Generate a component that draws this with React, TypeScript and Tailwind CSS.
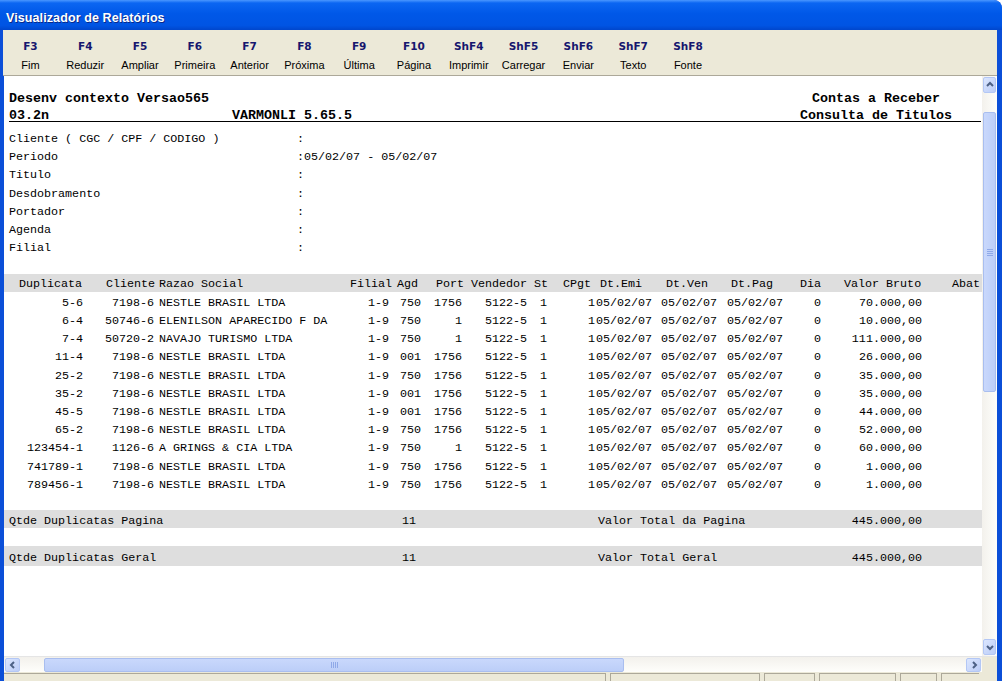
import React from "react";

const keys: [string, string][] = [
  ["F3", "Fim"],
  ["F4", "Reduzir"],
  ["F5", "Ampliar"],
  ["F6", "Primeira"],
  ["F7", "Anterior"],
  ["F8", "Próxima"],
  ["F9", "Última"],
  ["F10", "Página"],
  ["ShF4", "Imprimir"],
  ["ShF5", "Carregar"],
  ["ShF6", "Enviar"],
  ["ShF7", "Texto"],
  ["ShF8", "Fonte"],
];

const fields: [string, string][] = [
  ["Cliente ( CGC / CPF / CODIGO )", ""],
  ["Periodo", "05/02/07 - 05/02/07"],
  ["Titulo", ""],
  ["Desdobramento", ""],
  ["Portador", ""],
  ["Agenda", ""],
  ["Filial", ""],
];

type Row = [string, string, string, string, string, string, string, string, string, string, string, string, string, string];

const rows: Row[] = [
  ["5-6", "7198-6", "NESTLE BRASIL LTDA", "1-9", "750", "1756", "5122-5", "1", "1", "05/02/07", "05/02/07", "05/02/07", "0", "70.000,00"],
  ["6-4", "50746-6", "ELENILSON APARECIDO F DA", "1-9", "750", "1", "5122-5", "1", "1", "05/02/07", "05/02/07", "05/02/07", "0", "10.000,00"],
  ["7-4", "50720-2", "NAVAJO TURISMO LTDA", "1-9", "750", "1", "5122-5", "1", "1", "05/02/07", "05/02/07", "05/02/07", "0", "111.000,00"],
  ["11-4", "7198-6", "NESTLE BRASIL LTDA", "1-9", "001", "1756", "5122-5", "1", "1", "05/02/07", "05/02/07", "05/02/07", "0", "26.000,00"],
  ["25-2", "7198-6", "NESTLE BRASIL LTDA", "1-9", "750", "1756", "5122-5", "1", "1", "05/02/07", "05/02/07", "05/02/07", "0", "35.000,00"],
  ["35-2", "7198-6", "NESTLE BRASIL LTDA", "1-9", "001", "1756", "5122-5", "1", "1", "05/02/07", "05/02/07", "05/02/07", "0", "35.000,00"],
  ["45-5", "7198-6", "NESTLE BRASIL LTDA", "1-9", "001", "1756", "5122-5", "1", "1", "05/02/07", "05/02/07", "05/02/07", "0", "44.000,00"],
  ["65-2", "7198-6", "NESTLE BRASIL LTDA", "1-9", "750", "1756", "5122-5", "1", "1", "05/02/07", "05/02/07", "05/02/07", "0", "52.000,00"],
  ["123454-1", "1126-6", "A GRINGS & CIA LTDA", "1-9", "750", "1", "5122-5", "1", "1", "05/02/07", "05/02/07", "05/02/07", "0", "60.000,00"],
  ["741789-1", "7198-6", "NESTLE BRASIL LTDA", "1-9", "750", "1756", "5122-5", "1", "1", "05/02/07", "05/02/07", "05/02/07", "0", "1.000,00"],
  ["789456-1", "7198-6", "NESTLE BRASIL LTDA", "1-9", "750", "1756", "5122-5", "1", "1", "05/02/07", "05/02/07", "05/02/07", "0", "1.000,00"],
];

function Chevron({ dir }: { dir: "up" | "down" | "left" | "right" }) {
  const d =
    dir === "up"
      ? "M2 6 L5 3 L8 6"
      : dir === "down"
      ? "M2 4 L5 7 L8 4"
      : dir === "left"
      ? "M6 2 L3 5 L6 8"
      : "M4 2 L7 5 L4 8";
  return (
    <svg width="10" height="10" viewBox="0 0 10 10">
      <path d={d} fill="none" stroke="#4d6185" strokeWidth="2" />
    </svg>
  );
}

function ArrowBtn({ dir, cls }: { dir: "up" | "down" | "left" | "right"; cls: string }) {
  return (
    <div
      className={
        "shrink-0 flex items-center justify-center rounded-[2px] border border-[#b3c7f5] bg-[linear-gradient(135deg,#dbe6fe,#bccdf7)] " +
        cls
      }
    >
      <Chevron dir={dir} />
    </div>
  );
}

export default function App() {
  const mono = "font-['Liberation_Mono','Courier_New',monospace]";
  return (
    <div className="w-[1002px] h-[681px] overflow-hidden flex flex-col bg-[#0b4fd8] rounded-tr-[8px]">
      {/* Title bar */}
      <div className="h-[30px] shrink-0 flex items-center pl-[6px] pt-[6px] bg-[linear-gradient(to_bottom,#4a97ff_0%,#0b66f2_10%,#0058e8_45%,#0054e3_85%,#0046cc_100%)] rounded-tr-[8px]">
        <span className="font-['Liberation_Sans',Arial,sans-serif] font-bold text-[12.5px] text-white [text-shadow:1px_1px_0_#0a2a8a] tracking-[0.1px]">
          Visualizador de Relatórios
        </span>
      </div>

      <div className="flex-1 flex flex-col ml-[4px] mr-[5px] min-h-0">
        {/* Toolbar */}
        <div className="h-[46px] shrink-0 bg-[#ece9d8] border-b border-[#aca899] flex -ml-[1px]">
          {keys.map(([k, l]) => (
            <div key={k} className="w-[54.8px] flex flex-col items-center pt-[9px]">
              <span className="font-['DejaVu_Sans',Verdana,sans-serif] font-bold text-[10.5px] leading-[14px] text-[#16166e]">
                {k}
              </span>
              <span className="mt-[5px] font-['Liberation_Sans',Tahoma,sans-serif] text-[11px] leading-[14px] text-black">
                {l}
              </span>
            </div>
          ))}
        </div>

        {/* Main area */}
        <div className="flex-1 flex min-h-0">
          <div className={"flex-1 bg-white overflow-hidden text-black " + mono}>
            {/* header */}
            <div className="pt-[14px] pl-[5px] font-bold text-[13.33px]">
              <div className="flex h-[17px] leading-[17px]">
                <div className="w-[791px]">Desenv contexto Versao565</div>
                <div className="w-[152px] text-center">Contas a Receber</div>
              </div>
              <div className="flex h-[14px] leading-[17px]">
                <div className="w-[223px]">03.2n</div>
                <div className="w-[568px]">VARMONLI 5.65.5</div>
                <div className="w-[152px] text-center">Consulta de Titulos</div>
              </div>
              <div className="h-px w-[972px] bg-black" />
            </div>

            {/* fields */}
            <div className="pt-[8px] pl-[5px] text-[11.7px] leading-[18.2px]">
              {fields.map(([l, v]) => (
                <div key={l} className="flex h-[18.2px] whitespace-pre">
                  <div className="w-[288px]">{l}</div>
                  <div>:{v}</div>
                </div>
              ))}
            </div>

            {/* table header */}
            <div className="mt-[16.5px] h-[18px] bg-[#dedede] flex items-start pt-[1px] leading-[18px] text-[11.7px] whitespace-pre">
              <div className="w-[15px]" />
              <div className="w-[87px]">Duplicata</div>
              <div className="w-[53px]">Cliente</div>
              <div className="w-[191px]">Razao Social</div>
              <div className="w-[47px]">Filial</div>
              <div className="w-[39px]">Agd</div>
              <div className="w-[35px]">Port</div>
              <div className="w-[63px]">Vendedor</div>
              <div className="w-[29px]">St</div>
              <div className="w-[37px]">CPgt</div>
              <div className="w-[66px]">Dt.Emi</div>
              <div className="w-[65px]">Dt.Ven</div>
              <div className="w-[69px]">Dt.Pag</div>
              <div className="w-[44px]">Dia</div>
              <div className="w-[108px]">Valor Bruto</div>
              <div>Abat</div>
            </div>

            {/* rows */}
            <div className="mt-[2px] text-[11.7px] leading-[18.2px]">
              {rows.map((r, i) => (
                <div key={i} className="flex h-[18.2px] whitespace-pre">
                  <div className="w-[79px] text-right">{r[0]}</div>
                  <div className="w-[71px] text-right">{r[1]}</div>
                  <div className="w-[191px] pl-[5px]">{r[2]}</div>
                  <div className="w-[44px] text-right">{r[3]}</div>
                  <div className="w-[32px] pl-[11px]">{r[4]}</div>
                  <div className="w-[41px] text-right">{r[5]}</div>
                  <div className="w-[65px] text-right">{r[6]}</div>
                  <div className="w-[20px] text-right">{r[7]}</div>
                  <div className="w-[48px] text-right">{r[8]}</div>
                  <div className="w-[66px] pl-[1px]">{r[9]}</div>
                  <div className="w-[66px]">{r[10]}</div>
                  <div className="w-[73px]">{r[11]}</div>
                  <div className="w-[21px] text-right">{r[12]}</div>
                  <div className="w-[101px] text-right">{r[13]}</div>
                </div>
              ))}
            </div>

            {/* totals */}
            <div className="mt-[16px] h-[18px] bg-[#dedede] flex items-start pt-[2px] leading-[18px] text-[11.7px] whitespace-pre pl-[5px]">
              <div className="w-[393px]">Qtde Duplicatas Pagina</div>
              <div className="w-[196px]">11</div>
              <div className="w-[224px]">Valor Total da Pagina</div>
              <div className="w-[100px] text-right">445.000,00</div>
            </div>
            <div className="mt-[18px] h-[20px] bg-[#dedede] flex items-start pt-[3px] leading-[18px] text-[11.7px] whitespace-pre pl-[5px]">
              <div className="w-[393px]">Qtde Duplicatas Geral</div>
              <div className="w-[196px]">11</div>
              <div className="w-[224px]">Valor Total Geral</div>
              <div className="w-[100px] text-right">445.000,00</div>
            </div>
          </div>

          {/* vertical scrollbar */}
          <div className="w-[15px] shrink-0 flex flex-col bg-[linear-gradient(to_right,#f3f1ec,#fefefb)] py-px">
            <ArrowBtn dir="up" cls="h-[16px] mx-px" />
            <div className="flex-1 flex flex-col pt-[19px]">
              <div className="h-[280px] mx-px rounded-[2px] border border-[#a9beef] bg-[linear-gradient(to_right,#c9d8fc,#bccef8)] flex flex-col items-center justify-center gap-[1px]">
                <div className="w-[6px] h-px bg-[#8fa9e8]" />
                <div className="w-[6px] h-px bg-[#8fa9e8]" />
                <div className="w-[6px] h-px bg-[#8fa9e8]" />
                <div className="w-[6px] h-px bg-[#8fa9e8]" />
              </div>
            </div>
            <ArrowBtn dir="down" cls="h-[16px] mx-px" />
          </div>
        </div>

        {/* horizontal scrollbar */}
        <div className="h-[16px] shrink-0 flex border-t border-[#e5e5e5]">
          <div className="flex-1 flex items-center bg-[linear-gradient(to_bottom,#f3f1ec,#fefefb)] py-px">
            <ArrowBtn dir="left" cls="w-[15px] h-[14px] ml-px" />
            <div className="w-[24px]" />
            <div className="w-[580px] h-[14px] rounded-[2px] border border-[#a9beef] bg-[linear-gradient(to_bottom,#c9d8fc,#bccef8)] flex items-center justify-center gap-[1px]">
              <div className="w-px h-[6px] bg-[#8fa9e8]" />
              <div className="w-px h-[6px] bg-[#8fa9e8]" />
              <div className="w-px h-[6px] bg-[#8fa9e8]" />
              <div className="w-px h-[6px] bg-[#8fa9e8]" />
            </div>
            <div className="flex-1" />
            <ArrowBtn dir="right" cls="w-[15px] h-[14px] mr-px" />
          </div>
          <div className="w-[15px] bg-[#ece9d8]" />
        </div>

        {/* status bar */}
        <div className="h-[9px] shrink-0 bg-[#ece9d8] flex pt-[1px] gap-[4px]">
          <div className="w-[602px] border-t border-r border-[#aca899]" />
          <div className="w-[150px] border-t border-l border-r border-[#aca899]" />
          <div className="w-[51px] border-t border-l border-r border-[#aca899]" />
          <div className="w-[77px] border-t border-l border-r border-[#aca899]" />
          <div className="w-[37px] border-t border-l border-r border-[#aca899]" />
          <div className="w-[38px] border-t border-l border-[#aca899]" />
        </div>
      </div>
    </div>
  );
}
